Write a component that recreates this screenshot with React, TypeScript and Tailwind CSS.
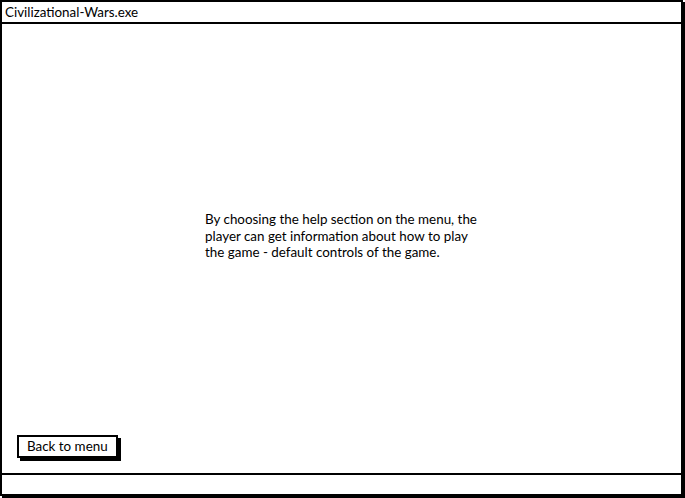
export default function App() {
  return (
    <div className="h-[498px] w-[685px] bg-white" style={{ fontFamily: 'Lato, "Open Sans", sans-serif' }}>
      <div className="flex h-[496px] w-[683px] flex-col border-2 border-black shadow-[2px_2px_0_#000]">
        {/* title bar */}
        <div className="flex h-[22px] items-center border-b-2 border-black px-[3px] text-[13.4px] text-black">
          Civilizational-Wars.exe
        </div>

        {/* content */}
        <div className="flex flex-1 flex-col px-[15px] pb-[15px]">
          <div className="flex-1 pl-[188px] pt-[187px]">
            <p className="w-[280px] text-[13.4px] leading-[16.5px] text-black">
              By choosing the help section on the menu, the player can get information about how to play
              the game - default controls of the game.
            </p>
          </div>
          <div>
            <button className="h-[23px] border-2 border-black bg-white px-[8px] text-[13.4px] leading-none text-black shadow-[3px_3px_0_#000]">
              Back to menu
            </button>
          </div>
        </div>

        {/* status bar */}
        <div className="h-[21px] border-t-2 border-black" />
      </div>
    </div>
  )
}
